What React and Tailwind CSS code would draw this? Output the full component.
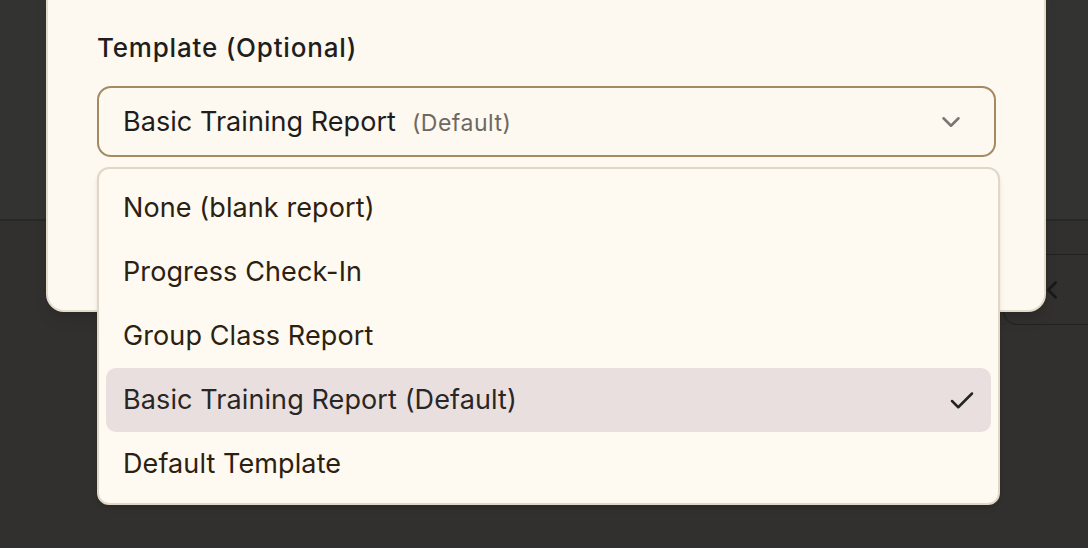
import React from 'react';
import { ChevronDown, ChevronLeft, Check } from 'lucide-react';

const templates = [
  { id: 'none', name: 'None (blank report)' },
  { id: 'progress', name: 'Progress Check-In' },
  { id: 'group', name: 'Group Class Report' },
  { id: 'basic', name: 'Basic Training Report (Default)', selected: true },
  { id: 'default', name: 'Default Template' },
];

const App = () => {
  return (
    <div className="relative h-[548px] w-full overflow-hidden bg-[#31302e] font-['Inter',sans-serif]">
      {/* page behind the backdrop */}
      <div className="h-[221px] border-b-2 border-[#292826] bg-[#333331]" />
      <div className="flex justify-end pt-[33px]">
        <div className="mr-[-40px] flex h-[71px] w-[125px] items-center rounded-[14px] border border-[#22211f] pl-[33px]">
          <ChevronLeft className="h-[30px] w-[30px] text-[#1a1917]" strokeWidth={2} />
        </div>
      </div>

      {/* modal */}
      <div className="absolute left-[46px] top-[-20px] h-[332px] w-[1000px] rounded-[18px] border-2 border-[#e4dbcb] bg-[#fdf8f0] px-[49px] pt-[50px] shadow-lg">
        <div className="text-[26px] font-medium leading-[32px] tracking-[0.8px] text-[#1f1e1c]">Template (Optional)</div>
        <button className="mt-[22px] flex h-[71px] w-[899px] items-center justify-between rounded-[14px] border-2 border-[#a58a5f] bg-[#fdf8f0] pl-[24px] pr-[28px]">
          <span className="flex items-baseline gap-[16px] pt-[2px]">
            <span className="text-[27px] tracking-[0.05px] text-[#1e1d1b]">Basic Training Report</span>
            <span className="text-[23px] tracking-[0.5px] text-[#6d6862]">(Default)</span>
          </span>
          <ChevronDown className="h-[30px] w-[30px] text-[#7a7773]" strokeWidth={2} />
        </button>
      </div>

      {/* dropdown menu */}
      <div className="absolute left-[97px] top-[167px] w-[903px] rounded-[12px] border-2 border-[#e0d7c6] bg-[#fef9f1] p-[7px] shadow-md">
        {templates.map((t) => (
          <div
            key={t.id}
            className={`flex h-[64px] items-center justify-between rounded-[10px] pl-[17px] pr-[14px] pt-[1px] text-[27px] tracking-[0.1px] ${
              t.selected ? 'bg-[#eadfdf] text-[#282726]' : 'text-[#2c2110]'
            }`}
          >
            <span>{t.name}</span>
            {t.selected && <Check className="h-[30px] w-[30px] text-[#252423]" strokeWidth={2} />}
          </div>
        ))}
      </div>
    </div>
  );
};

export default App;
